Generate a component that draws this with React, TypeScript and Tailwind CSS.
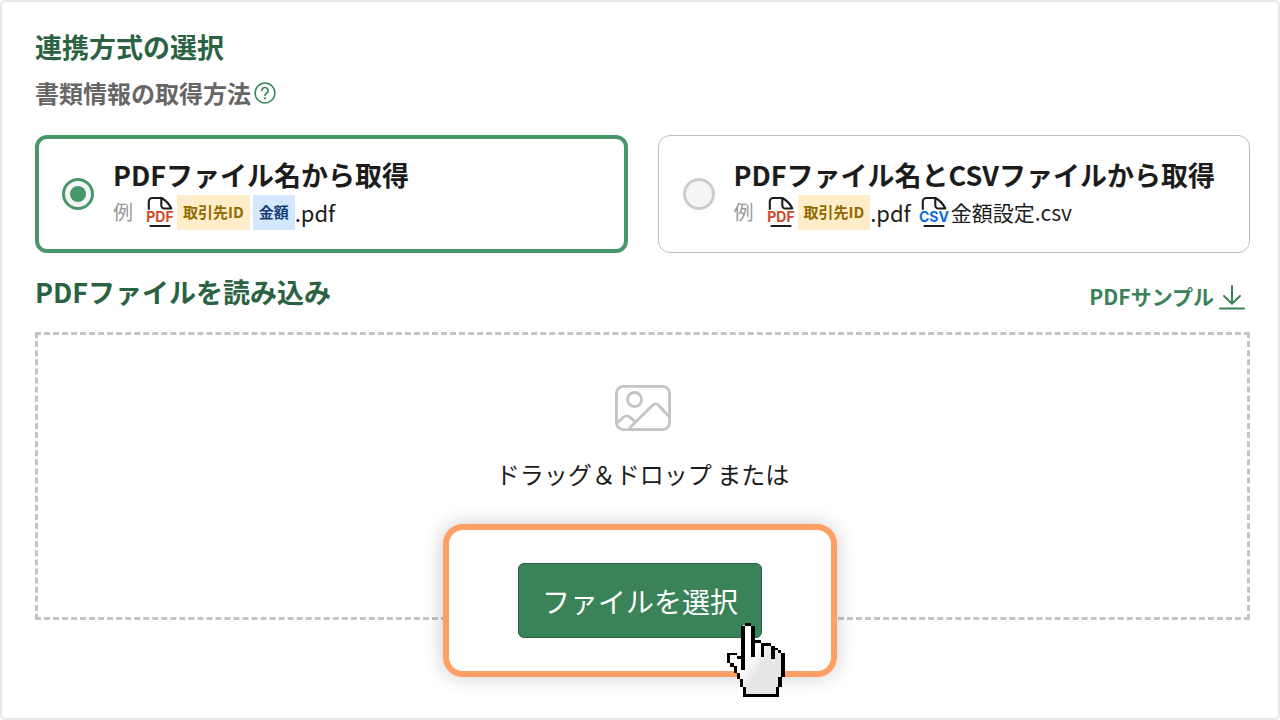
import { useState } from 'react';
import type { ReactNode } from 'react';

const FileIcon = ({ label, color }: { label: string; color: string }) => (
  <svg className="w-8 h-8 shrink-0" viewBox="0 0 32 32" fill="none">
    <path
      d="M3.8 13V5.5a3.5 3.5 0 0 1 3.5-3.5h9.2c3.5 2 8 6.500 9.800 10.500M16.300 2v7.500a3 3 0 0 0 3 3H26.300"
      stroke="#1c1c1c"
      strokeWidth="2.1"
      strokeLinecap="round"
      strokeLinejoin="round"
    />
    <path
      d="M5.5 30h19"
      stroke="#1c1c1c"
      strokeWidth="2.2"
      strokeLinecap="round"
    />
    <text
      x="15"
      y="26"
      textAnchor="middle"
      fill={color}
      fontFamily="Inter, sans-serif"
      fontWeight="700"
      fontSize="14"
    >
      {label}
    </text>
  </svg>
);

const HelpIcon = () => (
  <svg className="w-6 h-6" viewBox="0 0 24 24" fill="none" stroke="#3a8257">
    <circle cx="12" cy="12" r="9.9" strokeWidth="1.5" />
    <path
      d="M8.9 9.6a3.1 3.1 0 1 1 4.6 2.7c-1 .6-1.5 1-1.5 2.1"
      strokeWidth="1.6"
      strokeLinecap="round"
    />
    <circle cx="12" cy="17.3" r="1.1" fill="#3a8257" stroke="none" />
  </svg>
);

const DownloadIcon = () => (
  <svg
    className="w-7 h-7"
    viewBox="0 0 28 28"
    fill="none"
    stroke="#3a8257"
    strokeWidth="2"
    strokeLinecap="round"
    strokeLinejoin="round"
  >
    <path d="M14 4v17.5M6 14l8 7.7 8-7.7M2 26.500h24" />
  </svg>
);

const ImageIcon = () => (
  <svg
    className="w-14 h-12"
    viewBox="0 0 56 48"
    fill="none"
    stroke="#c4c4c4"
    strokeWidth="2.8"
  >
    <rect x="1.4" y="2.4" width="53.2" height="43.2" rx="7" />
    <circle cx="19.5" cy="15.5" r="7" />
    <path d="M1.5 39.5l7.3-6.5a4.5 4.5 0 0 1 6 0l6.2 5.5M15 45.5v-2l22.6-22.2a4 4 0 0 1 6 0L54.5 33" />
  </svg>
);

// x, y, width, height
const HAND_OUTLINE = [
  [54, 0, 18, 9],
  [42, 9, 12, 132],
  [72, 9, 12, 92],
  [84, 51, 18, 9],
  [102, 60, 10, 41],
  [112, 60, 21, 9],
  [133, 69, 10, 40],
  [143, 75, 10, 7],
  [153, 81, 10, 9],
  [163, 90, 11, 72],
  [154, 162, 10, 30],
  [146, 192, 10, 30],
  [54, 212, 94, 10],
  [48, 192, 10, 30],
  [39, 167, 10, 26],
  [30, 150, 10, 18],
  [20, 130, 10, 20],
  [10, 119, 10, 12],
  [0, 90, 10, 29],
  [10, 90, 20, 7],
  [30, 98, 12, 10],
];

const HandCursor = () => (
  <svg
    className="absolute left-[278px] top-[93px] w-[58px] h-[74px] pointer-events-none"
    viewBox="0 0 174 222"
    shapeRendering="crispEdges"
  >
    <defs>
      <linearGradient id="hand" x1="0.3" y1="0.4" x2="0.75" y2="0.8">
        <stop offset="0.2" stopColor="#ffffff" />
        <stop offset="0.6" stopColor="#e6e6e6" />
      </linearGradient>
    </defs>
    <path
      d="M54 6H72V56H102V64H133V74H153V86H166V162H158V192H148V214H54V192H45V167H36V150H26V130H16V119H6V94H30V102H48V6Z"
      fill="url(#hand)"
    />
    {HAND_OUTLINE.map(([x, y, width, height]) => (
      <rect key={`${x}-${y}`} x={x} y={y} width={width} height={height} />
    ))}
  </svg>
);

const YellowTag = ({ children }: { children: ReactNode }) => (
  <span className="flex items-center h-[35px] px-1.5 bg-[#ffecc8] text-[#8f6b00] text-[15px] font-bold">
    {children}
  </span>
);

const BlueTag = ({ children }: { children: ReactNode }) => (
  <span className="flex items-center h-[35px] px-1.5 bg-[#d3e8ff] text-[#153e75] text-[15px] font-bold">
    {children}
  </span>
);

type MethodCardProps = {
  id: string;
  title: string;
  checked: boolean;
  onSelect: () => void;
  children: ReactNode;
};

const MethodCard = ({
  id,
  title,
  checked,
  onSelect,
  children,
}: MethodCardProps) => (
  <label
    htmlFor={id}
    className={`flex items-center gap-[19px] h-[118px] rounded-xl bg-white cursor-pointer ${
      checked
        ? 'border-4 border-[#479768] pl-[23px]'
        : 'border border-[#bdbdbd] pl-6'
    }`}
  >
    <span className="relative flex shrink-0">
      <input
        id={id}
        type="radio"
        name="method"
        checked={checked}
        onChange={onSelect}
        className="appearance-none w-8 h-8 rounded-full border-3 border-[#cccccc] bg-[#f5f5f5] checked:border-[#479768]"
      />
      {checked && (
        <span className="absolute inset-2 rounded-full bg-[#479768]"></span>
      )}
    </span>
    <span className="flex flex-col gap-0.5 pb-0.5">
      <span className="text-[27px] leading-9 font-bold whitespace-nowrap">
        {title}
      </span>
      <span className="flex items-center">{children}</span>
    </span>
  </label>
);

const App = () => {
  const [method, setMethod] = useState('pdf');

  return (
    <main className="relative min-h-screen border-2 border-[#e8e8e8] rounded-md bg-white pl-[33px] pr-7 pt-[27px] text-[#1c1c1c] font-['Noto_Sans_CJK_JP',sans-serif]">
      <h1 className="text-[27px] leading-9 font-bold text-[#2b6342]">
        連携方式の選択
      </h1>
      <div className="flex items-center gap-0.5 mt-3">
        <h2 className="text-2xl font-bold text-[#666666]">
          書類情報の取得方法
        </h2>
        <button type="button" aria-label="ヘルプ">
          <HelpIcon />
        </button>
      </div>

      <div className="grid grid-cols-2 gap-[30px] mt-[26px]">
        <MethodCard
          id="method-pdf"
          title="PDFファイル名から取得"
          checked={method === 'pdf'}
          onSelect={() => setMethod('pdf')}
        >
          <span className="text-xl text-[#999999] mr-3">例</span>
          <FileIcon label="PDF" color="#d2492a" />
          <span className="flex gap-[3px]">
            <YellowTag>取引先ID</YellowTag>
            <BlueTag>金額</BlueTag>
          </span>
          <span className="text-[22px] leading-8">.pdf</span>
        </MethodCard>
        <MethodCard
          id="method-csv"
          title="PDFファイル名とCSVファイルから取得"
          checked={method === 'csv'}
          onSelect={() => setMethod('csv')}
        >
          <span className="text-xl text-[#999999] mr-3">例</span>
          <FileIcon label="PDF" color="#d2492a" />
          <YellowTag>取引先ID</YellowTag>
          <span className="text-[22px] leading-8 mr-2">.pdf</span>
          <FileIcon label="CSV" color="#0a6ae0" />
          <span className="text-[21px] leading-8">金額設定.csv</span>
        </MethodCard>
      </div>

      <div className="flex items-center justify-between mt-[19px] pr-1">
        <h2 className="text-[27px] leading-10 font-bold text-[#2b6342]">
          PDFファイルを読み込み
        </h2>
        <a
          href="#sample"
          className="flex items-center gap-1 mt-2 text-[21px] leading-8 font-bold text-[#3a8257]"
        >
          PDFサンプル
          <DownloadIcon />
        </a>
      </div>

      <section className="flex flex-col items-center h-[288px] mt-5 pt-[49px] border-3 border-dashed border-[#c4c4c4]">
        <ImageIcon />
        <p className="mt-[26px] text-2xl">ドラッグ＆ドロップ または</p>
      </section>

      {/* ボタンの強調枠 */}
      <div className="absolute top-[522px] left-1/2 -translate-x-1/2 px-[69px] py-[33px] border-6 border-[#ff9f66] rounded-[20px] bg-white shadow-[0_0_20px_rgba(0,0,0,0.2)]">
        <button
          type="button"
          className="h-[75px] px-[23px] rounded-md border border-[#2b6342] bg-[#3a8257] text-[28px] text-white whitespace-nowrap"
        >
          ファイルを選択
        </button>
        <HandCursor />
      </div>
    </main>
  );
};

export default App;
